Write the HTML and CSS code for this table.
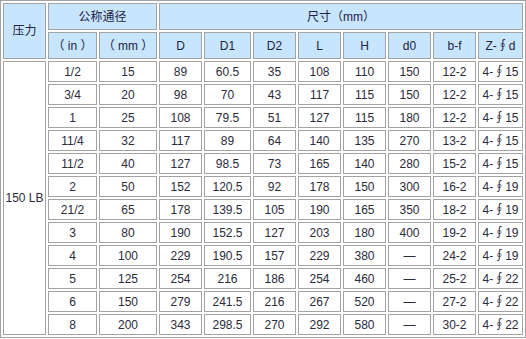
FILE: index.html
```html
<!DOCTYPE html>
<html>
<head>
<meta charset="utf-8">
<link rel="stylesheet" href="styles.css">
</head>
<body>
<table class="spec">
  <colgroup>
    <col class="c43"><col class="c49"><col class="c58"><col class="c43"><col class="c47"><col class="c43"><col class="c43"><col class="c43"><col class="c43"><col class="c43"><col class="c45">
  </colgroup>
  <tr class="hrow">
    <td class="hd" rowspan="2">压力</td>
    <td class="hd" colspan="2">公称通径</td>
    <td class="hd" colspan="8">尺寸（mm）</td>
  </tr>
  <tr class="hrow">
    <td class="hd">（ in ）</td>
    <td class="hd">（ mm ）</td>
    <td class="hd">D</td>
    <td class="hd">D1</td>
    <td class="hd">D2</td>
    <td class="hd">L</td>
    <td class="hd">H</td>
    <td class="hd">d0</td>
    <td class="hd">b-f</td>
    <td class="hd">Z-∮d</td>
  </tr>
  <tr class="drow"><td class="lb" rowspan="12">150 LB</td><td>1/2</td><td>15</td><td>89</td><td>60.5</td><td>35</td><td>108</td><td>110</td><td>150</td><td>12-2</td><td>4-∮15</td></tr>
  <tr class="drow"><td>3/4</td><td>20</td><td>98</td><td>70</td><td>43</td><td>117</td><td>115</td><td>150</td><td>12-2</td><td>4-∮15</td></tr>
  <tr class="drow"><td>1</td><td>25</td><td>108</td><td>79.5</td><td>51</td><td>127</td><td>115</td><td>180</td><td>12-2</td><td>4-∮15</td></tr>
  <tr class="drow"><td>11/4</td><td>32</td><td>117</td><td>89</td><td>64</td><td>140</td><td>135</td><td>270</td><td>13-2</td><td>4-∮15</td></tr>
  <tr class="drow"><td>11/2</td><td>40</td><td>127</td><td>98.5</td><td>73</td><td>165</td><td>140</td><td>280</td><td>15-2</td><td>4-∮15</td></tr>
  <tr class="drow"><td>2</td><td>50</td><td>152</td><td>120.5</td><td>92</td><td>178</td><td>150</td><td>300</td><td>16-2</td><td>4-∮19</td></tr>
  <tr class="drow"><td>21/2</td><td>65</td><td>178</td><td>139.5</td><td>105</td><td>190</td><td>165</td><td>350</td><td>18-2</td><td>4-∮19</td></tr>
  <tr class="drow"><td>3</td><td>80</td><td>190</td><td>152.5</td><td>127</td><td>203</td><td>180</td><td>400</td><td>19-2</td><td>4-∮19</td></tr>
  <tr class="drow"><td>4</td><td>100</td><td>229</td><td>190.5</td><td>157</td><td>229</td><td>380</td><td>—</td><td>24-2</td><td>4-∮19</td></tr>
  <tr class="drow"><td>5</td><td>125</td><td>254</td><td>216</td><td>186</td><td>254</td><td>460</td><td>—</td><td>25-2</td><td>4-∮22</td></tr>
  <tr class="drow"><td>6</td><td>150</td><td>279</td><td>241.5</td><td>216</td><td>267</td><td>520</td><td>—</td><td>27-2</td><td>4-∮22</td></tr>
  <tr class="drow"><td>8</td><td>200</td><td>343</td><td>298.5</td><td>270</td><td>292</td><td>580</td><td>—</td><td>30-2</td><td>4-∮22</td></tr>
</table>
</body>
</html>
```
FILE: styles.css
```css
html, body {
  margin: 0;
  padding: 0;
  background: #ffffff;
}
.spec {
  table-layout: fixed;
  width: 526px;
  border-collapse: separate;
  border-spacing: 2px;
  border: 1px solid #a3a3a3;
  font-family: "Liberation Sans", Arial, "Noto Sans CJK SC", sans-serif;
  font-size: 12px;
  color: #2b2b3a;
}
.spec td {
  box-sizing: border-box;
  border: 1px solid #a3a3a3;
  padding: 0;
  text-align: center;
  vertical-align: middle;
  white-space: nowrap;
  line-height: 14px;
}
.spec .hd {
  background: #c7e5fd;
  color: #222244;
}
.c43 { width: 43px; }
.c45 { width: 45px; }
.c47 { width: 47px; }
.c49 { width: 49px; }
.c58 { width: 58px; }
.hrow { height: 27px; }
.drow { height: 21px; }
```
